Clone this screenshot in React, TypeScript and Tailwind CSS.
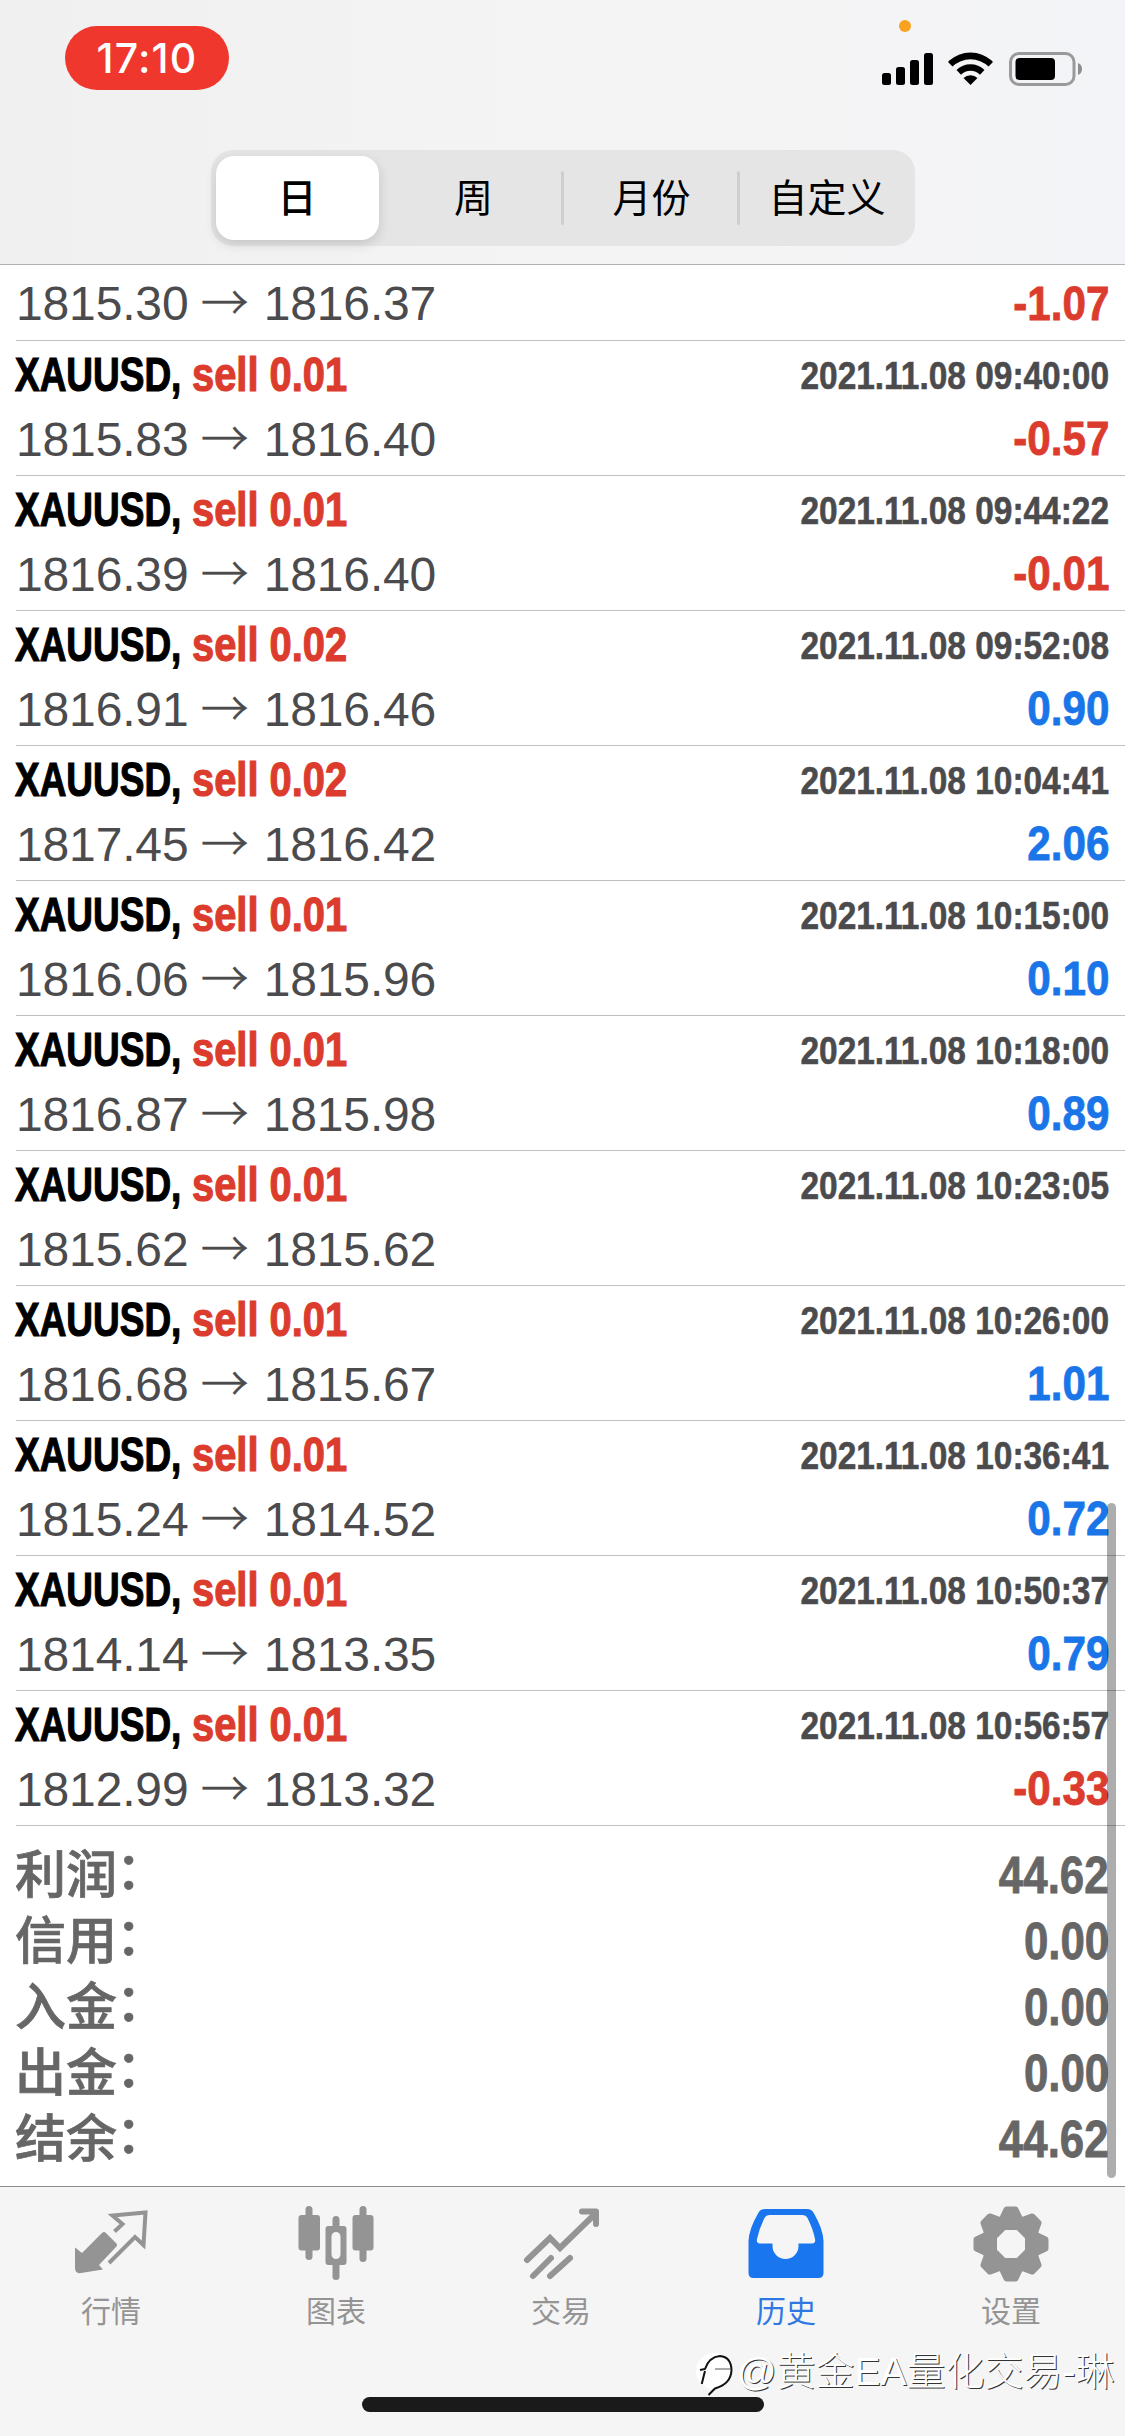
import React from "react";
import clsx from "clsx";

type Deal = {
  lots: string;
  from: string;
  to: string;
  time: string;
  profit: string;
};

const deals: Deal[] = [
  { lots: "0.01", from: "1815.83", to: "1816.40", time: "2021.11.08 09:40:00", profit: "-0.57" },
  { lots: "0.01", from: "1816.39", to: "1816.40", time: "2021.11.08 09:44:22", profit: "-0.01" },
  { lots: "0.02", from: "1816.91", to: "1816.46", time: "2021.11.08 09:52:08", profit: "0.90" },
  { lots: "0.02", from: "1817.45", to: "1816.42", time: "2021.11.08 10:04:41", profit: "2.06" },
  { lots: "0.01", from: "1816.06", to: "1815.96", time: "2021.11.08 10:15:00", profit: "0.10" },
  { lots: "0.01", from: "1816.87", to: "1815.98", time: "2021.11.08 10:18:00", profit: "0.89" },
  { lots: "0.01", from: "1815.62", to: "1815.62", time: "2021.11.08 10:23:05", profit: "" },
  { lots: "0.01", from: "1816.68", to: "1815.67", time: "2021.11.08 10:26:00", profit: "1.01" },
  { lots: "0.01", from: "1815.24", to: "1814.52", time: "2021.11.08 10:36:41", profit: "0.72" },
  { lots: "0.01", from: "1814.14", to: "1813.35", time: "2021.11.08 10:50:37", profit: "0.79" },
  { lots: "0.01", from: "1812.99", to: "1813.32", time: "2021.11.08 10:56:57", profit: "-0.33" },
];

const summary = [
  { label: "利润", value: "44.62" },
  { label: "信用", value: "0.00" },
  { label: "入金", value: "0.00" },
  { label: "出金", value: "0.00" },
  { label: "结余", value: "44.62" },
];

const StatusBar = () => (
  <div className="relative flex h-[150px] items-start justify-between pl-[65px] pr-[42px] pt-[26px]">
    <div className="flex h-16 w-[164px] items-center justify-center rounded-full bg-[#f0372d] font-['Inter'] text-[41px] font-medium leading-none tracking-[1.2px] text-white">
      17:10
    </div>
    <span className="absolute left-[899px] top-5 h-3 w-3 rounded-full bg-[#f9a21f]" />
    <svg className="mt-[25px]" width="202" height="36" viewBox="0 0 202 36">
      <rect x="1" y="22" width="9" height="12" rx="2.5" />
      <rect x="15" y="16" width="9" height="18" rx="2.5" />
      <rect x="29" y="9" width="9" height="25" rx="2.5" />
      <rect x="43" y="2" width="9" height="32" rx="2.5" />
      <path d="M67.500 11.500Q67 10.500 68 9.800A32 32 0 0 1 111 9.800Q112 10.500 111.500 11.500L107.500 15.500A26 26 0 0 0 71.500 15.500Z" />
      <path d="M75.500 19A20 20 0 0 1 103.500 19L99 23.700A13.500 13.500 0 0 0 80 23.700Z" />
      <path d="M82.500 27A10 10 0 0 1 96.500 27L89.500 34Z" />
      <rect x="129.500" y="2.500" width="63.500" height="31" rx="8.500" fill="none" stroke="#9a9a9c" strokeWidth="3" />
      <rect x="134.500" y="7" width="39.500" height="22" rx="4" />
      <path d="M197 12a6.500 6.500 0 0 1 0 12z" fill="#8e8e90" />
    </svg>
  </div>
);

const PeriodTabs = () => (
  <div className="mx-auto flex h-24 w-[704px] items-center rounded-[22px] bg-[#e5e5e6] text-[39px] leading-none text-black">
    <div className="ml-[5px] flex h-[84px] w-[163px] items-center justify-center rounded-[18px] bg-white font-medium shadow-[0_4px_12px_rgba(0,0,0,0.14)]">
      日
    </div>
    <div className="flex-1 pl-2 text-center">周</div>
    <span className="h-[54px] w-[3px] rounded-full bg-[#cfcfd1]" />
    <div className="w-[173px] pl-[3px] text-center">月份</div>
    <span className="h-[54px] w-[3px] rounded-full bg-[#cfcfd1]" />
    <div className="w-[175px] text-center">自定义</div>
  </div>
);

const Prices = ({ from, to }: { from: string; to: string }) => (
  <span className="whitespace-pre text-5xl leading-none tracking-[-0.15px] text-[#4b4b4d]">
    {from} <span className="-ml-px mr-[2px] font-['Noto_Sans_CJK_SC'] font-light leading-none [-webkit-text-stroke:0.4px_currentColor]">→</span> {to}
  </span>
);

const Profit = ({ value }: { value: string }) => (
  <span
    className={clsx(
      "origin-right scale-x-[0.88] text-5xl font-bold leading-none [-webkit-text-stroke:0.8px_currentColor]",
      value.startsWith("-") ? "text-[#dc3c2d]" : "text-[#1a76e8]"
    )}
  >
    {value}
  </span>
);

const DealRow = ({ deal }: { deal: Deal }) => (
  <div className="ml-4 h-[135px] border-b border-[#c0c0c2] pr-4">
    <div className="flex h-[68px] items-center justify-between">
      <span className="-ml-px flex text-5xl font-bold leading-none [-webkit-text-stroke:1.2px_currentColor]">
        <span className="w-[177px] origin-left scale-x-[0.77] whitespace-nowrap text-black">XAUUSD,</span>
        <span className="origin-left scale-x-[0.83] whitespace-nowrap text-[#dc3c2d]">sell {deal.lots}</span>
      </span>
      <span className="origin-right scale-x-[0.857] text-[39px] font-bold leading-none text-[#4b4b4d] [-webkit-text-stroke:0.6px_currentColor]">
        {deal.time}
      </span>
    </div>
    <div className="flex h-[59px] items-center justify-between">
      <div className="pb-[3px]">
        <Prices from={deal.from} to={deal.to} />
      </div>
      <Profit value={deal.profit} />
    </div>
  </div>
);

const QuotesIcon = () => (
  <svg width="76" height="76" viewBox="0 0 76 76">
    <path d="M2 40.500L9 46L29 26Q31 24 33 26L43 36Q45 38 43 40L26 58L30 62.500L8 66Q2 67 2 61Z" fill="#949494" />
    <path d="M41.500 24.500L49.500 17L39.500 8.500L72.500 5.500L70.500 38L62 30L36 56" fill="none" stroke="#949494" strokeWidth="4" />
  </svg>
);

const ChartIcon = () => (
  <svg width="76" height="76" viewBox="0 0 76 76" fill="#949494">
    <rect x="0.500" y="8" width="21.500" height="35.500" rx="3" />
    <rect x="7.500" y="-1" width="7" height="54" rx="3.500" />
    <rect x="54.500" y="8" width="21" height="35.500" rx="3" />
    <rect x="61.500" y="-1" width="7" height="56" rx="3.500" />
    <path d="M38 9a3.500 3.500 0 0 0-3.500 3.500V19H30.500a3 3 0 0 0-3 3V55a3 3 0 0 0 3 3H34.500V69.500a3.500 3.500 0 0 0 7 0V58H45.500a3 3 0 0 0 3-3V22a3 3 0 0 0-3-3H41.500V12.500A3.500 3.500 0 0 0 38 9ZM38 25a4.500 4.500 0 0 1 4.500 4.500V47.500a4.500 4.500 0 0 1-9 0V29.500A4.500 4.500 0 0 1 38 25Z" fillRule="evenodd" />
  </svg>
);

const TradeIcon = () => (
  <svg width="76" height="76" viewBox="0 0 76 76" fill="none" stroke="#949494" strokeWidth="6" strokeLinecap="round" strokeLinejoin="round">
    <path d="M4 53L27 31L37 41L72 7" strokeLinejoin="miter" />
    <path d="M59 4.500H73V17" />
    <path d="M10 69L28 51M27 69L47 51" />
  </svg>
);

const HistoryIcon = () => (
  <svg width="76" height="76" viewBox="0 0 76 76">
    <path
      d="M17 2H59Q64 2 66 6.500Q75 22 75.500 34V66Q75.500 71 70.500 71H5.500Q0.500 71 0.500 66V34Q1 22 10 6.500Q12 2 17 2ZM22 8Q18 8 16.500 11Q11 22 9 32Q8 36 12 36.500H24.500V39A13 13 0 0 0 50.500 39V36.500H64Q68 36 67 32Q65 22 59.500 11Q58 8 54 8Z"
      fill="#1a76ee"
      fillRule="evenodd"
    />
  </svg>
);

const SettingsIcon = () => (
  <svg width="76" height="76" viewBox="0 0 76 76">
    <g fill="#949494" stroke="#949494" strokeWidth="6" strokeLinejoin="round">
      {[0, 45, 90, 135, 180, 225, 270, 315].map((angle) => (
        <path key={angle} d="M29 12L33.500 2.500H42.500L47 12L46 20H30Z" transform={`rotate(${angle} 38 37)`} />
      ))}
    </g>
    <circle cx="38" cy="37" r="22.500" fill="none" stroke="#949494" strokeWidth="14" />
  </svg>
);

const tabs = [
  { label: "行情", icon: <QuotesIcon /> },
  { label: "图表", icon: <ChartIcon /> },
  { label: "交易", icon: <TradeIcon /> },
  { label: "历史", icon: <HistoryIcon />, active: true },
  { label: "设置", icon: <SettingsIcon /> },
];

const TabBar = () => (
  <div className="relative h-[250px] border-t border-[#8d8d8f] bg-[#f5f5f5]">
    <div className="flex pt-5">
      {tabs.map((tab) => (
        <div key={tab.label} className="flex w-[225px] flex-col items-center gap-[13px] pr-[3px] [&_svg]:overflow-visible">
          {tab.icon}
          <span
            className={clsx(
              "text-[30px] leading-[32px]",
              tab.active ? "text-[#2f78e4]" : "text-[#949494]"
            )}
          >
            {tab.label}
          </span>
        </div>
      ))}
    </div>
    <div className="absolute left-[362px] top-[210px] h-[15px] w-[402px] rounded-full bg-[#1a1a1a]" />
    <div className="absolute left-[697px] top-[162px] flex items-center whitespace-nowrap">
      <svg className="overflow-visible" width="40" height="46" viewBox="0 0 40 46">
        <circle cx="17" cy="22" r="18" fill="#fff" />
        <path d="M3 21L8 20Q12 8 23 7Q34 8 34.500 21Q34 35 18 39.500L11.500 46" fill="none" stroke="#111" strokeWidth="2" />
        <path d="M8 22L4.700 35" fill="none" stroke="#111" strokeWidth="2" />
        <path d="M18 20H34" fill="none" stroke="#555" strokeWidth="1" />
      </svg>
      <span className="text-[39px] font-light leading-[46px] text-white [text-shadow:1px_1px_0_#333]">
        @黄金EA量化交易-琳
      </span>
    </div>
  </div>
);

export default function App() {
  return (
    <div className="relative flex h-[2436px] w-[1125px] flex-col overflow-hidden bg-white font-['Liberation_Sans','Noto_Sans_CJK_SC',sans-serif]">
      <header className="h-[265px] border-b border-[#b2b2b4] bg-linear-to-r from-[#f0f0f1] via-[#f5f4f4] to-[#f3f4f7]">
        <StatusBar />
        <PeriodTabs />
      </header>

      <main className="flex-1">
        <div className="ml-4 flex h-[76px] items-end justify-between border-b border-[#c0c0c2] pb-[12px] pr-4">
          <Prices from="1815.30" to="1816.37" />
          <Profit value="-1.07" />
        </div>
        {deals.map((deal) => (
          <DealRow key={deal.time} deal={deal} />
        ))}
        <div className="flex flex-col px-4 pt-4 text-[51px] text-[#666]">
          {summary.map((item) => (
            <div key={item.label} className="flex h-[66px] items-center justify-between">
              <span className="-ml-px font-medium leading-none [-webkit-text-stroke:0.7px_currentColor]">
                {item.label}
                <span className="relative -left-px -top-1">：</span>
              </span>
              <span className="origin-right scale-x-[0.86] font-bold leading-none [-webkit-text-stroke:0.8px_currentColor]">
                {item.value}
              </span>
            </div>
          ))}
        </div>
      </main>

      <TabBar />
      <div className="absolute left-[1107px] top-[1503px] h-[675px] w-[9px] rounded-full bg-black/32" />
    </div>
  );
}
